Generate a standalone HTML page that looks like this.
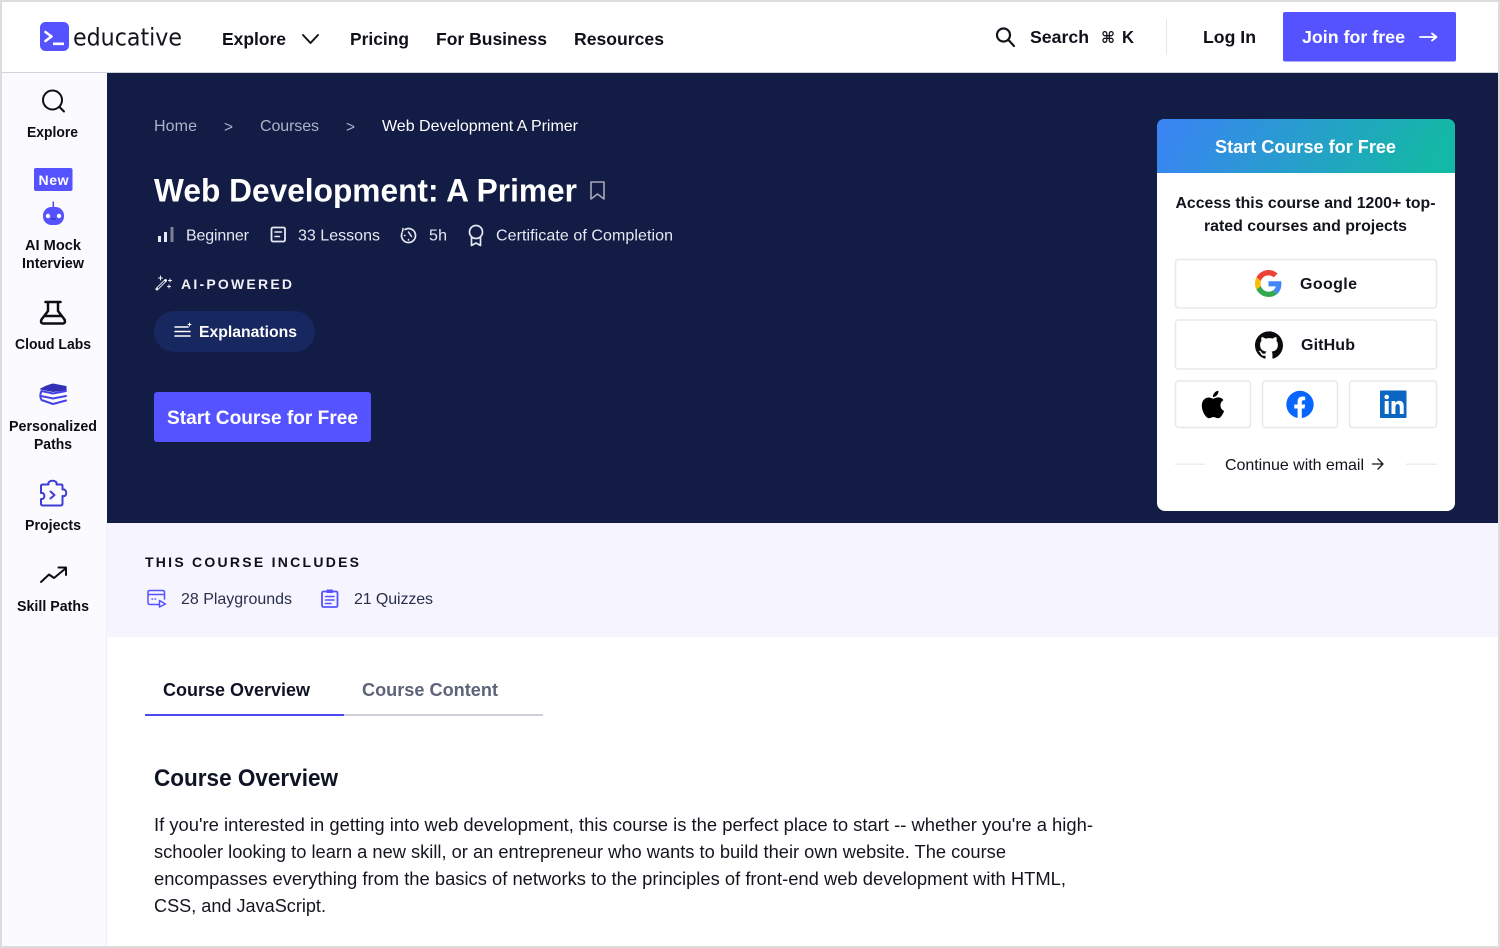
<!DOCTYPE html>
<html lang="en"><head><meta charset="utf-8"><title>Web Development: A Primer</title>
<style>
html,body{margin:0;padding:0;width:1500px;height:948px;overflow:hidden;background:#fff}
svg{display:block;position:absolute;left:0;top:0}
text{font-family:"Liberation Sans",Arial,sans-serif;white-space:pre}
.b{font-weight:700}
.nav{font-size:17.5px;font-weight:700;fill:#0f1119}
.side{font-size:14.3px;font-weight:700;fill:#0c0e14}
.bc{font-size:16px;fill:#aeb3c8}
.meta{font-size:16px;fill:#e6e8f2}
.p{font-size:18px;fill:#14161f}
.w{fill:#fff}
.ln{fill:none;stroke-linecap:round;stroke-linejoin:round}
</style></head><body>
<svg width="1500" height="948" viewBox="0 0 1500 948" xmlns="http://www.w3.org/2000/svg">
<defs><linearGradient id="g" x1="0" y1="0" x2="1" y2="0.1"><stop offset="0" stop-color="#3b82f6"/><stop offset="1" stop-color="#14b8a6"/></linearGradient></defs>
<!-- backgrounds -->
<rect x="107" y="73" width="1393" height="450" fill="#121c45"/>
<rect x="2" y="73" width="105" height="875" fill="#fafaff"/>
<rect x="107" y="523" width="1393" height="114" fill="#f5f4ff"/>
<rect x="2" y="72" width="1496" height="1" fill="#cfd1d8"/>
<rect x="106" y="523" width="1" height="425" fill="#eeeef4"/>
<rect x="0" y="0" width="1500" height="2" fill="#dcdcdc"/>
<rect x="0" y="0" width="2" height="948" fill="#dcdcdc"/>
<rect x="1498" y="0" width="2" height="948" fill="#dcdcdc"/>
<rect x="0" y="946" width="1500" height="2" fill="#dcdcdc"/>

<!-- logo -->
<rect x="40" y="22" width="29" height="29" rx="5.5" fill="#5553ff"/>
<path d="M45.500 32 L51.500 36.500 L45.500 41" class="ln" stroke="#fff" stroke-width="2.600"/>
<rect x="53" y="42.500" width="11" height="2.600" fill="#fff"/>
<text x="73" y="45.500" font-size="24" fill="#14151c" style="font-family:'DejaVu Sans',sans-serif" textLength="109" lengthAdjust="spacingAndGlyphs">educative</text>

<!-- nav -->
<text class="nav" x="222" y="45" textLength="64" lengthAdjust="spacingAndGlyphs">Explore</text>
<path d="M303 35 L310.500 43 L318 35" class="ln" stroke="#14151c" stroke-width="2"/>
<text class="nav" x="350" y="45" textLength="59" lengthAdjust="spacingAndGlyphs">Pricing</text>
<text class="nav" x="436" y="45" textLength="111" lengthAdjust="spacingAndGlyphs">For Business</text>
<text class="nav" x="574" y="45" textLength="90" lengthAdjust="spacingAndGlyphs">Resources</text>
<circle cx="1003.500" cy="35" r="6.500" class="ln" stroke="#14151c" stroke-width="2.200"/>
<path d="M1008.500 40 L1014 46" class="ln" stroke="#14151c" stroke-width="2.200"/>
<text class="nav" x="1030" y="43" textLength="59" lengthAdjust="spacingAndGlyphs">Search</text>
<text x="1101" y="43" font-size="16" font-weight="700" fill="#14151c" style="font-family:'DejaVu Sans',sans-serif" textLength="14" lengthAdjust="spacingAndGlyphs">⌘</text>
<text class="nav" x="1122" y="43" textLength="12" lengthAdjust="spacingAndGlyphs">K</text>
<rect x="1166" y="19" width="1" height="36" fill="#e6e6ea"/>
<text class="nav" x="1203" y="43" textLength="53" lengthAdjust="spacingAndGlyphs">Log In</text>
<rect x="1283" y="12" width="173" height="49.500" rx="2" fill="#5553ff"/>
<text class="nav w" x="1302" y="43" textLength="103" lengthAdjust="spacingAndGlyphs" style="fill:#fff">Join for free</text>
<path d="M1420 37 H1436 M1432 33.500 L1436.500 37 L1432 40.500" class="ln" stroke="#fff" stroke-width="1.800"/>

<!-- sidebar -->
<circle cx="52.500" cy="100" r="9.500" class="ln" stroke="#0c0e14" stroke-width="2"/>
<path d="M59.500 107 L64 111.500" class="ln" stroke="#0c0e14" stroke-width="2"/>
<text class="side" x="27" y="137" textLength="51" lengthAdjust="spacingAndGlyphs">Explore</text>
<rect x="34" y="168" width="38.500" height="23" rx="2" fill="#5553ff"/>
<text x="38.500" y="185" font-size="14" font-weight="700" fill="#fff" textLength="30">New</text>
<path d="M53.300 201.500 V207" stroke="#4a48e8" stroke-width="1.500"/>
<rect x="43" y="207" width="21" height="18" rx="8.500" fill="#5553ff"/>
<circle cx="48" cy="216" r="2.200" fill="#fff"/><circle cx="59" cy="216" r="2.200" fill="#fff"/>
<path d="M51 219 H56" stroke="#2b2aa8" stroke-width="1"/>
<text class="side" x="25" y="250" textLength="56" lengthAdjust="spacingAndGlyphs">AI Mock</text>
<text class="side" x="22" y="268" textLength="62" lengthAdjust="spacingAndGlyphs">Interview</text>
<path d="M45.500 302 H60.500 M48 302 V311 L41.500 319.500 Q40 323.500 43.500 323.500 H62.500 Q66 323.500 64.500 319.500 L58 311 V302 M44.500 316 H61.500" class="ln" stroke="#0c0e14" stroke-width="2.500"/>
<text class="side" x="15" y="349" textLength="76" lengthAdjust="spacingAndGlyphs">Cloud Labs</text>
<path d="M40.500 389 Q48 385 53 384 L66 386.500 V390 L53 391.500 Z" fill="#3230b5" stroke="#3230b5" stroke-width="1" stroke-linejoin="round"/>
<path d="M66 391 L53 393.500 L41.500 391 Q39 396 41.500 400 L53 404 L66 400.500 M41 396 L53 398.500 L66 396" class="ln" stroke="#4543e8" stroke-width="2"/>
<text class="side" x="9" y="431" textLength="88" lengthAdjust="spacingAndGlyphs">Personalized</text>
<text class="side" x="34" y="449" textLength="38" lengthAdjust="spacingAndGlyphs">Paths</text>
<path d="M43 484.500 H48.500 C47 479.500 58 479.500 56.500 484.500 H61 Q62.500 484.500 62.500 486 V489.500 C67.500 488.500 67.500 497.500 62.500 496 V503.500 Q62.500 505.500 60.500 505.500 H43 Q41 505.500 41 503.500 V499 C45.500 500 45.500 492 41 493 V486 Q41 484.500 43 484.500 Z" class="ln" stroke="#3f3dd6" stroke-width="2"/>
<path d="M50.500 491.500 L54.500 495 L50.500 498.500" class="ln" stroke="#3f3dd6" stroke-width="2"/>
<text class="side" x="25" y="530" textLength="56" lengthAdjust="spacingAndGlyphs">Projects</text>
<path d="M41 582 L49 574.500 L54 578 L65.500 568.500 M58.500 567.500 H66 V575" class="ln" stroke="#0c0e14" stroke-width="2"/>
<text class="side" x="17" y="611" textLength="72" lengthAdjust="spacingAndGlyphs">Skill Paths</text>

<!-- breadcrumb -->
<text class="bc" x="154" y="131" textLength="43">Home</text>
<text class="bc" x="224" y="132" textLength="9" lengthAdjust="spacingAndGlyphs">&gt;</text>
<text class="bc" x="260" y="131" textLength="59">Courses</text>
<text class="bc" x="346" y="132" textLength="9" lengthAdjust="spacingAndGlyphs">&gt;</text>
<text x="382" y="131" font-size="16" fill="#fff" textLength="196">Web Development A Primer</text>

<!-- title -->
<text x="154" y="201.500" font-size="32" font-weight="700" fill="#fff" textLength="423" lengthAdjust="spacingAndGlyphs">Web Development: A Primer</text>
<path d="M591 182 H604 V199 L597.500 194 L591 199 Z" class="ln" stroke="#a6a9b4" stroke-width="1.600"/>

<!-- meta -->
<rect x="158" y="236" width="3" height="6" fill="#e6e8f2"/>
<rect x="164" y="232" width="3" height="10" fill="#e6e8f2"/>
<rect x="170.500" y="227" width="3" height="15" fill="#7c8092"/>
<text class="meta" x="186" y="240.500" textLength="63">Beginner</text>
<rect x="271.500" y="227.500" width="13.500" height="14" rx="1.500" class="ln" stroke="#e6e8f2" stroke-width="1.800"/>
<path d="M275 232 H281.500 M275 236.500 H279.500" class="ln" stroke="#e6e8f2" stroke-width="1.600"/>
<text class="meta" x="298" y="240.500" textLength="82">33 Lessons</text>
<path d="M405 229.500 A7 7 0 1 1 402 233" class="ln" stroke="#e6e8f2" stroke-width="1.700"/>
<path d="M403 228.500 L402.500 231.500 M408.500 232 L411.500 236.500 M404.500 235.500 H405 M408.500 239.500 V240" class="ln" stroke="#e6e8f2" stroke-width="1.500"/>
<text class="meta" x="429" y="240.500" textLength="18">5h</text>
<circle cx="476" cy="232" r="6.500" class="ln" stroke="#e6e8f2" stroke-width="1.700"/>
<path d="M471.500 237.500 V245.500 L476 243 L480.500 245.500 V237.500" class="ln" stroke="#e6e8f2" stroke-width="1.700"/>
<text class="meta" x="496" y="240.500" textLength="177">Certificate of Completion</text>

<!-- AI powered -->
<path d="M157 289 L165.500 280.500" class="ln" stroke="#f0f0f6" stroke-width="3"/>
<path d="M158 288 L164.500 281.500" class="ln" stroke="#121c45" stroke-width="1"/>
<path d="M160.500 276 V280 M158.500 278 H162.500 M170 279 V282 M168.500 280.500 H171.500 M169 285 V288 M167.500 286.500 H170.500" class="ln" stroke="#f0f0f6" stroke-width="1"/>
<text x="181" y="289" font-size="14" font-weight="700" fill="#f0f0f6" textLength="111">AI-POWERED</text>
<rect x="154" y="311" width="161" height="41" rx="20.500" fill="#17275f"/>
<path d="M175 327 H188 M175 331.500 H190 M175 336 H190" class="ln" stroke="#fff" stroke-width="1.500"/>
<path d="M189.500 323 V326 M188 324.500 H191" class="ln" stroke="#fff" stroke-width="1"/>
<text x="199" y="337" font-size="16" font-weight="700" fill="#fff" textLength="98" lengthAdjust="spacingAndGlyphs">Explanations</text>
<rect x="154" y="392" width="217" height="50" rx="3" fill="#5553ff"/>
<text x="167" y="424" font-size="19" font-weight="700" fill="#fff" textLength="191" lengthAdjust="spacingAndGlyphs">Start Course for Free</text>

<!-- card -->
<rect x="1157" y="119" width="298" height="392" rx="8" fill="#fff"/>
<path d="M1157 173 V127 Q1157 119 1165 119 H1447 Q1455 119 1455 127 V173 Z" fill="url(#g)"/>
<text x="1215" y="153" font-size="18" font-weight="700" fill="#fff" textLength="181" lengthAdjust="spacingAndGlyphs">Start Course for Free</text>
<text x="1175.500" y="208" font-size="16" font-weight="700" fill="#12141c" textLength="260" lengthAdjust="spacingAndGlyphs">Access this course and 1200+ top-</text>
<text x="1204" y="231" font-size="16" font-weight="700" fill="#12141c" textLength="203" lengthAdjust="spacingAndGlyphs">rated courses and projects</text>
<g fill="#fff" stroke="#e8e8ea" stroke-width="1.500">
<rect x="1175.500" y="259.500" width="261" height="48.500" rx="3"/>
<rect x="1175.500" y="320" width="261" height="49" rx="3"/>
<rect x="1175.500" y="381" width="75" height="46.500" rx="3"/>
<rect x="1262.500" y="381" width="75" height="46.500" rx="3"/>
<rect x="1349.500" y="381" width="87" height="46.500" rx="3"/>
</g>
<svg x="1255" y="270" width="27" height="27" viewBox="0 0 48 48">
<path fill="#EA4335" d="M24 9.500c3.540 0 6.710 1.220 9.210 3.600l6.850-6.850C35.900 2.380 30.470 0 24 0 14.620 0 6.510 5.380 2.560 13.220l7.980 6.190C12.430 13.720 17.740 9.500 24 9.500z"/>
<path fill="#4285F4" d="M46.980 24.550c0-1.570-.15-3.090-.38-4.550H24v9.020h12.940c-.58 2.960-2.260 5.480-4.780 7.180l7.730 6c4.510-4.180 7.090-10.360 7.090-17.650z"/>
<path fill="#FBBC05" d="M10.530 28.590c-.48-1.450-.76-2.990-.76-4.590s.27-3.140.76-4.590l-7.980-6.190C.92 16.460 0 20.120 0 24c0 3.880.92 7.540 2.560 10.780l7.970-6.190z"/>
<path fill="#34A853" d="M24 48c6.480 0 11.930-2.130 15.890-5.810l-7.730-6c-2.150 1.450-4.920 2.300-8.160 2.300-6.260 0-11.570-4.220-13.470-9.910l-7.980 6.190C6.510 42.620 14.620 48 24 48z"/>
</svg>
<text x="1300" y="289" font-size="16" font-weight="700" fill="#12141c" textLength="57">Google</text>
<svg x="1255" y="331" width="28" height="28" viewBox="0 0 24 24"><path fill="#0b0b0f" d="M12 .297c-6.630 0-12 5.373-12 12 0 5.303 3.438 9.800 8.205 11.385.6.113.82-.258.82-.577 0-.285-.01-1.040-.015-2.040-3.338.724-4.042-1.610-4.042-1.610C4.422 18.070 3.633 17.700 3.633 17.700c-1.087-.744.084-.729.084-.729 1.205.084 1.838 1.236 1.838 1.236 1.070 1.835 2.809 1.305 3.495.998.108-.776.417-1.305.76-1.605-2.665-.3-5.466-1.332-5.466-5.930 0-1.310.465-2.380 1.235-3.220-.135-.303-.54-1.523.105-3.176 0 0 1.005-.322 3.300 1.230.96-.267 1.980-.399 3-.405 1.020.006 2.040.138 3 .405 2.280-1.552 3.285-1.230 3.285-1.230.645 1.653.24 2.873.12 3.176.765.84 1.230 1.910 1.230 3.220 0 4.610-2.805 5.625-5.475 5.920.42.36.81 1.096.81 2.220 0 1.606-.015 2.896-.015 3.286 0 .315.21.69.825.57C20.565 22.092 24 17.592 24 12.297c0-6.627-5.373-12-12-12"/></svg>
<text x="1301" y="350" font-size="16" font-weight="700" fill="#12141c" textLength="54">GitHub</text>
<svg x="1196.500" y="388" width="33" height="33" viewBox="0 0 24 24"><path fill="#000" d="M18.710 19.500c-.83 1.240-1.710 2.450-3.050 2.470-1.340.03-1.770-.79-3.290-.79-1.530 0-2 .77-3.270.82-1.310.05-2.300-1.320-3.140-2.530C4.250 17 2.940 12.450 4.700 9.390c.87-1.520 2.430-2.480 4.120-2.510 1.280-.02 2.500.87 3.290.87.78 0 2.260-1.070 3.810-.91.65.03 2.470.26 3.640 1.980-.09.06-2.170 1.280-2.150 3.810.03 3.020 2.650 4.030 2.680 4.040-.03.07-.42 1.440-1.380 2.830M13 3.500c.73-.83 1.940-1.460 2.940-1.500.13 1.170-.34 2.350-1.040 3.190-.69.85-1.830 1.510-2.950 1.420-.15-1.150.41-2.350 1.050-3.110z"/></svg>
<circle cx="1300" cy="404.500" r="13.700" fill="#0866ff"/>
<path d="M1297.600 418 V408.500 H1294.300 V404.500 H1297.600 V401.500 Q1297.600 396.500 1302.500 396.500 Q1304 396.500 1305.200 396.800 V400.200 H1303.500 Q1301.800 400.200 1301.800 402 V404.500 H1305.200 L1304.500 408.500 H1301.800 V418.200 Z" fill="#fff"/>
<rect x="1380" y="390.500" width="26.500" height="27.500" rx="1" fill="#0a66c2"/>
<circle cx="1386.700" cy="397" r="2.300" fill="#fff"/>
<rect x="1384.700" y="401" width="4" height="13" fill="#fff"/>
<path d="M1391.500 401 H1395.200 V403 Q1396.500 400.700 1399.300 400.700 Q1403.700 400.700 1403.700 406.500 V414 H1399.800 V407.500 Q1399.800 404 1397.600 404 Q1395.400 404 1395.400 407.500 V414 H1391.500 Z" fill="#fff"/>
<rect x="1175" y="463.500" width="30" height="1.500" fill="#ececee"/>
<rect x="1406" y="463.500" width="31" height="1.500" fill="#ececee"/>
<text x="1225" y="470" font-size="16" fill="#12141c" textLength="139">Continue with email</text>
<path d="M1372.500 464 H1382.500 M1378 459 L1383 464 L1378 469" class="ln" stroke="#12141c" stroke-width="1.300"/>

<!-- includes -->
<text x="145" y="567" font-size="14" font-weight="700" fill="#0e1016" textLength="214">THIS COURSE INCLUDES</text>
<path d="M159 604.500 H150 Q148 604.500 148 602.500 V592 Q148 590.500 150 590.500 H162.500 Q164.500 590.500 164.500 592 V599 M148 594.500 H164.500" class="ln" stroke="#5553ff" stroke-width="1.500"/>
<path d="M152 599 H152.500 M155 599 H155.500" class="ln" stroke="#5553ff" stroke-width="1.500"/>
<path d="M159.500 600.500 L165.500 604 L159.500 607 Z" class="ln" stroke="#5553ff" stroke-width="1.500"/>
<text x="181" y="604" font-size="16" fill="#2a2f4a" textLength="111">28 Playgrounds</text>
<rect x="322" y="591.500" width="15.500" height="15.500" rx="1.500" class="ln" stroke="#5553ff" stroke-width="1.800"/>
<rect x="326.500" y="589.500" width="6.500" height="3.500" rx=".8" fill="#5553ff"/>
<path d="M325.500 596.500 H334 M325.500 600 H334 M325.500 603.500 H331" class="ln" stroke="#5553ff" stroke-width="1.500"/>
<text x="354" y="604" font-size="16" fill="#2a2f4a" textLength="79">21 Quizzes</text>

<!-- tabs -->
<text x="163" y="696" font-size="18" font-weight="700" fill="#0f1425" textLength="147" lengthAdjust="spacingAndGlyphs">Course Overview</text>
<text x="362" y="696" font-size="18" font-weight="700" fill="#5d6478" textLength="136" lengthAdjust="spacingAndGlyphs">Course Content</text>
<rect x="344" y="714" width="199" height="2" fill="#cdcfd8"/>
<rect x="145" y="714" width="199" height="2" fill="#4b49f0"/>

<!-- overview -->
<text x="154" y="786" font-size="24" font-weight="700" fill="#0f1425" textLength="184" lengthAdjust="spacingAndGlyphs">Course Overview</text>
<text class="p" x="154" y="831" textLength="939" lengthAdjust="spacingAndGlyphs">If you're interested in getting into web development, this course is the perfect place to start -- whether you're a high-</text>
<text class="p" x="154" y="858" textLength="852" lengthAdjust="spacingAndGlyphs">schooler looking to learn a new skill, or an entrepreneur who wants to build their own website. The course</text>
<text class="p" x="154" y="885" textLength="912" lengthAdjust="spacingAndGlyphs">encompasses everything from the basics of networks to the principles of front-end web development with HTML,</text>
<text class="p" x="154" y="912" textLength="172" lengthAdjust="spacingAndGlyphs">CSS, and JavaScript.</text>
</svg>
</body></html>
